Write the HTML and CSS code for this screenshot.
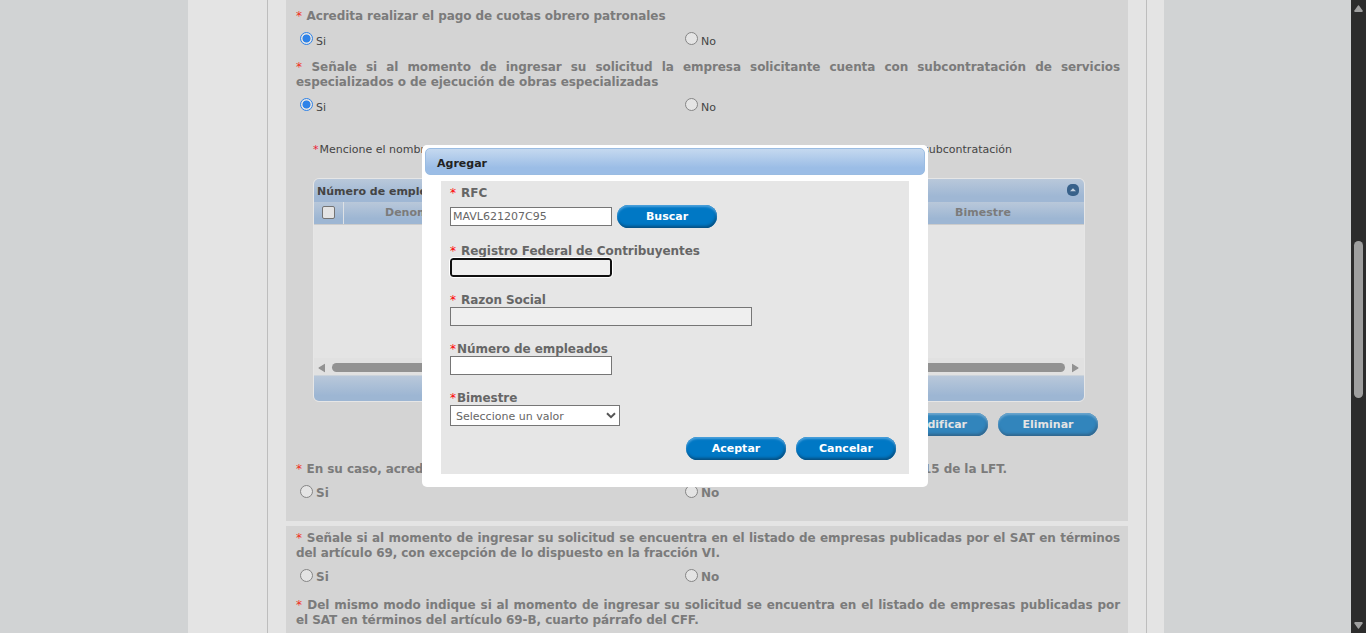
FILE: index.html
```
<!DOCTYPE html>
<html lang="es">
<head>
<meta charset="utf-8">
<title>Solicitud</title>
<link rel="stylesheet" href="styles.css">
</head>
<body>
<div class="page">
  <main class="sheet">
    <div class="frame">
      <section class="panel panel-first">
        <p class="question"><span class="req">*</span> Acredita realizar el pago de cuotas obrero patronales</p>
        <div class="options">
          <label class="option"><span class="radio checked"></span><span class="olabel">Si</span></label>
          <label class="option"><span class="radio"></span><span class="olabel">No</span></label>
        </div>
        <p class="question"><span class="line full"><span class="req">*</span> Señale si al momento de ingresar su solicitud la empresa solicitante cuenta con subcontratación de servicios</span><span class="line">especializados o de ejecución de obras especializadas</span></p>
        <div class="options">
          <label class="option"><span class="radio checked"></span><span class="olabel">Si</span></label>
          <label class="option"><span class="radio"></span><span class="olabel">No</span></label>
        </div>
        <p class="note"><span><span class="req">*</span>Mencione el nombre</span><span>la subcontratación</span></p>
        <div class="grid">
          <div class="grid-title"><span>Número de emple</span>
            <svg class="toggle" viewBox="0 0 12 12"><rect width="12" height="12" rx="5" fill="#38618a"/><path d="M3 7.2 6 4.2 9 7.2z" fill="#c3d0df"/></svg>
          </div>
          <div class="grid-head"><div class="check-cell"><span class="checkbox"></span></div><div class="col-name">Denom</div><div class="col-bim">Bimestre</div></div>
          <div class="grid-body"></div>
          <div class="hscroll">
            <svg viewBox="0 0 8 10"><path d="M7 1.2Q7 0.5 6.4 1L0.7 4.5Q0.2 5 0.7 5.5L6.4 9Q7 9.5 7 8.8z" fill="#929292"/></svg>
            <div class="hthumb"></div>
            <svg viewBox="0 0 8 10"><path d="M1 1.2Q1 0.5 1.6 1L7.3 4.5Q7.8 5 7.3 5.5L1.6 9Q1 9.5 1 8.8z" fill="#929292"/></svg>
          </div>
          <div class="pager"></div>
        </div>
        <div class="actions"><span class="btn dim">Modificar</span><span class="btn dim">Eliminar</span></div>
        <p class="question split"><span><span class="req">*</span> En su caso, acred</span><span>15 de la LFT.</span></p>
        <div class="options bold">
          <label class="option"><span class="radio"></span><span class="olabel">Si</span></label>
          <label class="option"><span class="radio"></span><span class="olabel">No</span></label>
        </div>
      </section>
      <section class="panel panel-second">
        <p class="question"><span class="line full"><span class="req">*</span> Señale si al momento de ingresar su solicitud se encuentra en el listado de empresas publicadas por el SAT en términos</span><span class="line">del artículo 69, con excepción de lo dispuesto en la fracción VI.</span></p>
        <div class="options bold">
          <label class="option"><span class="radio"></span><span class="olabel">Si</span></label>
          <label class="option"><span class="radio"></span><span class="olabel">No</span></label>
        </div>
        <p class="question"><span class="line full"><span class="req">*</span> Del mismo modo indique si al momento de ingresar su solicitud se encuentra en el listado de empresas publicadas por</span><span class="line">el SAT en términos del artículo 69-B, cuarto párrafo del CFF.</span></p>
      </section>
    </div>
  </main>
  <div class="vscroll">
    <svg viewBox="0 0 9 7"><path d="M4 0.4Q4.5 0 5 0.4L8.6 5.4Q9 7 8 7H1Q0 7 0.4 5.4z" fill="#9f9f9f"/></svg>
    <div class="vthumb"></div>
    <svg viewBox="0 0 9 7"><path d="M4 6.6Q4.5 7 5 6.6L8.6 1.6Q9 0 8 0H1Q0 0 0.4 1.6z" fill="#9f9f9f"/></svg>
  </div>
</div>
<div class="modal">
  <div class="modal-title">Agregar</div>
  <div class="form">
    <div class="flabel"><span class="req">*</span> RFC</div>
    <div class="search-row"><div class="field">MAVL621207C95</div><span class="btn">Buscar</span></div>
    <div class="flabel"><span class="req">*</span> Registro Federal de Contribuyentes</div>
    <div class="field readonly focused"></div>
    <div class="flabel"><span class="req">*</span> Razon Social</div>
    <div class="field readonly wide"></div>
    <div class="flabel"><span class="req">*</span>Número de empleados</div>
    <div class="field"></div>
    <div class="flabel"><span class="req">*</span>Bimestre</div>
    <div class="select"><span>Seleccione un valor</span><svg viewBox="0 0 10 7"><path d="M1 1.3 5 5.2 9 1.3" fill="none" stroke="#555" stroke-width="2"/></svg></div>
    <div class="form-actions"><span class="btn">Aceptar</span><span class="btn">Cancelar</span></div>
  </div>
</div>
</body>
</html>
```
FILE: styles.css
```
* { box-sizing: border-box; }
body { margin: 0; height: 633px; overflow: hidden; background: #d1d3d4; font-family: Verdana, "DejaVu Sans", sans-serif; font-size: 11px; color: #444; }
p { margin: 0; }
.page { display: flex; height: 633px; justify-content: space-between; padding-left: 188px; }
.sheet { width: 976px; background: #e4e4e4; padding-left: 79px; }
.frame { width: 880px; height: 633px; border-left: 1px solid #bdbdbd; border-right: 1px solid #bdbdbd; padding-left: 18px; overflow: hidden; }
.panel { width: 842px; background: #d4d4d4; padding-left: 10px; }
.panel-first { height: 521px; padding-top: 9px; }
.panel-second { height: 112px; margin-top: 5px; padding-top: 5px; }
.question { width: 824px; font-size: 12px; line-height: 15px; font-weight: bold; letter-spacing: -0.07px; color: #7b7b7b; white-space: nowrap; }
.line { display: block; }
.line.full { text-align-last: justify; }
.req { color: #f0301c; font-weight: normal; letter-spacing: 0.4px; }
.options { display: flex; height: 36px; padding: 8px 0 0 4px; }
.panel-second .options { height: 37px; }
.option { display: flex; width: 385px; gap: 3px; line-height: 20px; }
.radio { width: 13px; height: 13px; border: 1px solid #858585; border-radius: 50%; background: #e4e4e4; }
.radio.checked { border-color: #2f83e8; background: radial-gradient(circle, #2f83e8 3.6px, #e4e4e4 4.4px); }
.olabel { font-size: 11px; }
.bold .option { line-height: 17px; }
.bold .olabel { font-size: 12px; font-weight: bold; color: #7b7b7b; }
.note { display: flex; justify-content: space-between; width: 699px; margin: 16px 0 0 17px; line-height: 15px; font-size: 11px; white-space: nowrap; }
.note .req { color: #ec1c35; letter-spacing: 1px; }
.grid { width: 772px; height: 224px; margin: 21px 0 0 17px; border: 1px solid #e6e6e6; border-radius: 6px; background: #e4e4e4; overflow: hidden; }
.grid-title { display: flex; justify-content: space-between; height: 23px; padding: 4px 5px 0 3px; line-height: 18px; font-weight: bold; background: linear-gradient(#b9c8da, #9fb7d4 75%); }
.toggle { width: 12px; height: 12px; margin-top: 1px; }
.grid-head { display: flex; height: 22px; line-height: 22px; font-weight: bold; color: #7b7b7b; background: linear-gradient(#b9c8da, #9db6d3 75%); }
.check-cell { width: 30px; padding: 4px 0 0 8px; border-right: 1px solid #dde1e5; }
.checkbox { display: block; width: 13px; height: 13px; border: 1px solid #747474; border-radius: 2px; background: #e4e4e4; }
.col-name { width: 568px; padding-left: 41px; }
.col-bim { width: 142px; text-align: center; }
.grid-body { height: 134px; border-top: 1px solid #ccc; }
.hscroll { display: flex; height: 17px; align-items: center; justify-content: space-between; padding: 2px 5px 0 4px; background: #e1e1e1; }
.hscroll svg { width: 8px; height: 10px; }
.hthumb { width: 733px; height: 9px; border-radius: 5px; background: #929292; }
.pager { height: 27px; border-top: 1px solid #cbd3db; background: linear-gradient(#b9c8da, #9db6d3 75%); }
.actions { display: flex; justify-content: flex-end; width: 802px; gap: 10px; margin-top: 11px; }
.btn { width: 100px; height: 23px; border-radius: 12px; background: #0078c5; color: #fff; font-size: 11px; font-weight: bold; line-height: 24px; text-align: center; box-shadow: inset 0 2px 2px #4aa0db, inset -1px -2px 3px #064f80; }
.btn.dim { background: #3285bc; color: #e4e4e4; box-shadow: inset 0 2px 2px #6ba5cd, inset -1px -2px 3px #31658c; }
.split { display: flex; justify-content: space-between; width: 711px; margin-top: 26px; }
.vscroll { display: flex; flex-direction: column; align-items: center; justify-content: space-between; width: 15px; padding: 5px 0 4px; background: #2c2c2c; }
.vscroll svg { width: 9px; height: 7px; }
.vthumb { width: 9px; height: 157px; margin-bottom: -5px; border-radius: 5px; background: #9f9f9f; }
.modal { position: absolute; left: 422px; top: 145px; width: 506px; height: 342px; padding: 3px; border-radius: 5px; background: #fff; }
.modal-title { height: 27px; padding-left: 11px; border: 1px solid #9abce2; border-radius: 5px; background: linear-gradient(#c5d9ef, #9bbde6 75%); color: #222; font-weight: bold; line-height: 29px; }
.form { width: 468px; height: 293px; margin: 6px 0 0 16px; padding: 5px 0 0 9px; background: #e6e6e6; color: #666; }
.flabel { height: 14px; font-size: 12px; font-weight: bold; letter-spacing: -0.07px; line-height: 15px; white-space: nowrap; }
.flabel .req { color: #f00; letter-spacing: 1px; }
.field { width: 162px; height: 19px; margin-bottom: 16px; padding-left: 2px; border: 1px solid #767676; background: #fff; line-height: 18px; }
.search-row { display: flex; align-items: center; gap: 5px; height: 23px; margin: 5px 0 16px; }
.search-row .field { margin: 0; }
.focused { border: 2px solid #101010; border-radius: 3px; outline: 1px solid #fff; }
.readonly { background: #efefef; }
.wide { width: 302px; }
.select { display: flex; align-items: center; justify-content: space-between; width: 170px; height: 21px; padding: 0 3px 0 5px; border: 1px solid #767676; background: #fff; line-height: 19px; }
.select span { padding-top: 1px; }
.select svg { width: 10px; height: 7px; }
.form-actions { display: flex; justify-content: flex-end; gap: 10px; margin: 11px 13px 0 0; }
```
